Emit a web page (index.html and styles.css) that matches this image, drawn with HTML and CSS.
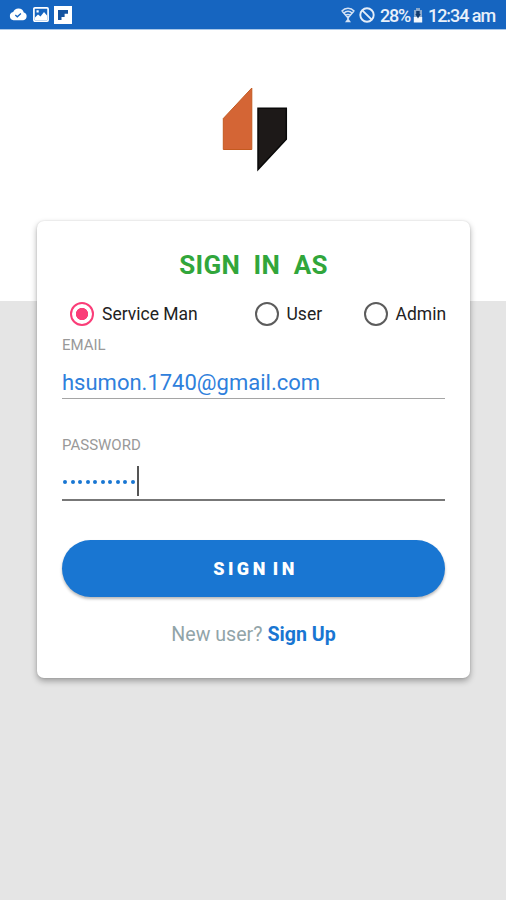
FILE: index.html
```html
<!DOCTYPE html>
<html lang="en">
<head>
<meta charset="utf-8">
<title>Sign in</title>
<link rel="stylesheet" href="styles.css">
</head>
<body>
<div class="screen">
  <header class="status">
    <div class="notifications">
      <svg width="19" height="13" viewBox="0 0 19 13"><path fill="#fff" d="M4.500 12.200a4.100 4.100 0 0 1-.3-8.100A5.600 5.600 0 0 1 14.800 4.600a3.900 3.900 0 0 1-.5 7.600z"/><path fill="none" stroke="#1665c0" stroke-width="1.300" d="M6.300 7.100l2 1.700 3.600-3.300"/></svg>
      <svg width="16" height="15" viewBox="0 0 16 15"><rect x=".9" y=".9" width="14.200" height="13.200" rx="1" fill="none" stroke="#fff" stroke-width="1.700"/><path fill="#fff" d="M2 13V10.500l3-3 2.500 2L11 5l3 3.500V13zM3.500 3.200h2.200v2.200H3.500z"/></svg>
      <svg width="18" height="18" viewBox="0 0 18 18"><path fill="#fff" d="M0 0h18v18H0z"/><path fill="#1453a0" d="M4 4h10v3.800h-3.400v3.100H7.500V14H4z"/></svg>
    </div>
    <div class="system">
      <svg class="wifi" width="14" height="17" viewBox="0 0 14 17"><g fill="none" stroke="#d4e2f4" stroke-width="1.500"><path d="M.6 4.200C4.500.2 9.500.2 13.400 4.200M2.600 6.300c2.800-2.600 6-2.600 8.800 0M1 4l6 6.800L13 4M4.700 8.400c1.500-1.200 3.100-1.200 4.600 0"/></g><path fill="#d4e2f4" d="M6.200 9h1.600v3.200l2.200 3H4l2.200-3z"/></svg>
      <svg class="blocked" width="16" height="16" viewBox="0 0 16 16"><g fill="none" stroke="#e4edf8" stroke-width="1.900"><circle cx="8" cy="8" r="6.700"/><path d="M3.300 3.300l9.400 9.400"/></g></svg>
      <span class="percent">28%</span>
      <svg class="battery" width="10" height="15" viewBox="0 0 10 15"><path fill="#8aa9cd" d="M3 0h4v2h2v7H1V2h2z"/><path fill="#f4f8fc" d="M.8 9h8.400v5.500H.8z"/><path fill="#123c70" d="M3.200 3h3.500v3h1L5 10.500 2.300 6h.9z"/></svg>
      <span class="time">12:34 am</span>
    </div>
  </header>
  <div class="brand">
    <svg width="66" height="86" viewBox="0 0 66 86"><path fill="#d46535" stroke="#c45a20" d="M1.300 32.500L29.800 2v61.500H1.300z"/><path fill="#1d1918" stroke="#090909" stroke-width="1.500" d="M36 22.300h28.300v31L36 83.500z"/></svg>
  </div>
  <main class="card">
    <h1>SIGN&nbsp; IN&nbsp; AS</h1>
    <div class="roles">
      <div class="role"><i class="radio selected"></i><span>Service Man</span></div>
      <div class="role"><i class="radio"></i><span>User</span></div>
      <div class="role"><i class="radio"></i><span>Admin</span></div>
    </div>
    <div class="label email-label"><span>EMAIL</span></div>
    <div class="field email"><span>hsumon.1740@gmail.com</span></div>
    <div class="label password-label"><span>PASSWORD</span></div>
    <div class="field password"><div class="dots"><i></i><i></i><i></i><i></i><i></i><i></i><i></i><i></i><i></i><i></i></div><i class="caret"></i></div>
    <div class="button"><span>SIGN IN</span></div>
    <p class="signup"><span class="question">New user?</span><b>Sign Up</b></p>
  </main>
</div>
</body>
</html>
```
FILE: styles.css
```css
* { box-sizing: border-box; }
body { margin: 0; font-family: Roboto, "Liberation Sans", sans-serif; }
svg { display: block; flex: none; }
.screen { width: 506px; height: 900px; overflow: hidden; background: linear-gradient(#fff 301px, #e5e5e5 301px); }
.status { height: 30px; padding: 0 11px 0 9px; display: flex; align-items: center; justify-content: space-between; background: #1665c0; border-bottom: 1px solid #a9c7e8; color: #e8f0fa; }
.notifications, .system { display: flex; align-items: center; }
.notifications { gap: 5px; }
.system { padding-top: 1px; font-size: 18px; font-weight: 500; white-space: nowrap; }
.blocked { margin-left: 4px; }
.percent { width: 30px; margin-left: 5px; letter-spacing: -1.200px; }
.battery { margin-left: 3px; }
.time { width: 67px; margin-left: 5px; letter-spacing: -1.050px; }
.brand { height: 191px; padding: 56px 0 0 222px; }
.card { width: 433px; height: 457px; margin-left: 37px; padding: 0 25px; background: #fff; border-radius: 7px; box-shadow: 0 3px 6px rgba(0,0,0,.32), 0 0 2px rgba(0,0,0,.12); display: flex; flex-direction: column; }
h1 { height: 32px; margin: 28px 0 0; text-align: center; font-size: 26px; line-height: 32px; font-weight: 700; letter-spacing: .3px; color: #31a63b; white-space: nowrap; }
.roles { height: 24px; margin: 21px 0 0 8px; display: grid; grid-template-columns: 184.500px 109px auto; font-size: 17.500px; color: #222; white-space: nowrap; }
.role { display: flex; align-items: center; gap: 8px; }
.radio { width: 24px; height: 24px; border: 2px solid #5c5c5c; border-radius: 50%; }
.selected { border-color: #fa3d78; background: radial-gradient(circle, #fa3d78 5.800px, transparent 6.500px); }
.label { height: 20px; line-height: 20px; font-size: 15px; color: #999; }
.email-label { margin-top: 9px; }
.field { border-bottom: 1px solid #a5a5a5; }
.email { height: 44px; padding-top: 13px; line-height: 30px; font-size: 22px; color: #2f80dc; }
.password-label { margin-top: 36px; }
.password { height: 46px; padding: 11px 0 0 1px; display: flex; border-bottom: 2px solid #777; }
.dots { height: 31px; display: flex; align-items: center; gap: 3.500px; }
.dots i { width: 4px; height: 4px; border-radius: 50%; background: #1976d2; }
.caret { width: 2px; height: 30px; margin-left: 2px; background: #555; }
.button { height: 57px; margin-top: 39px; padding-left: 4px; border-radius: 29px; background: #1976d2; box-shadow: 0 2px 3px rgba(0,0,0,.28); color: #fff; display: flex; align-items: center; justify-content: center; font-size: 18px; font-weight: 900; letter-spacing: 3.500px; word-spacing: -4px; }
.signup { height: 28px; margin: 24px 0 0; display: flex; justify-content: center; gap: 5px; line-height: 28px; font-size: 19.600px; color: #91a4a8; }
.signup b { color: #1976d2; font-weight: 700; }
```
